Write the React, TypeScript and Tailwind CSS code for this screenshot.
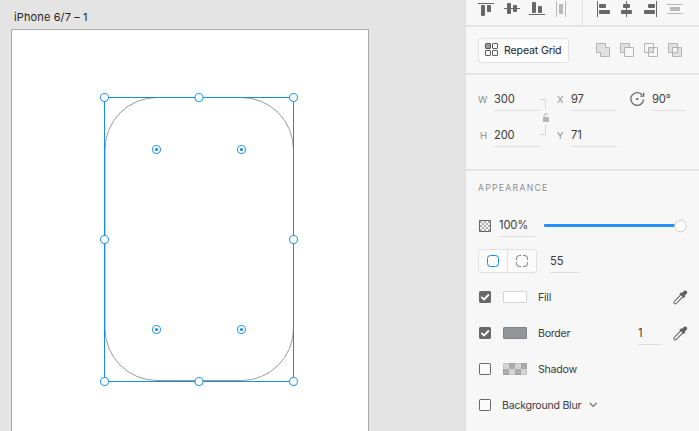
import React from "react";

const INK = "#676767";

function AlignIcons() {
  return (
    <svg width="233" height="25" viewBox="466 0 233 25" className="block shrink-0">
      <g fill={INK}>
        <rect x="478" y="3" width="16" height="1" />
        <rect x="481" y="5" width="4" height="11" rx="1" />
        <rect x="487" y="5" width="4" height="7" rx="1" />
        <rect x="504" y="8" width="16" height="1" />
        <rect x="507" y="3" width="4" height="11" rx="1" />
        <rect x="513" y="5" width="4" height="7" rx="1" />
        <rect x="529" y="14" width="16" height="1" />
        <rect x="532" y="2" width="4" height="11" rx="1" />
        <rect x="538" y="6" width="4" height="7" rx="1" />
        <rect x="597" y="1" width="1" height="16" />
        <rect x="599" y="4" width="7" height="4" rx="1" />
        <rect x="599" y="10" width="11" height="4" rx="1" />
        <rect x="626" y="1" width="1" height="16" />
        <rect x="623" y="4" width="7" height="4" rx="1" />
        <rect x="621" y="10" width="11" height="4" rx="1" />
        <rect x="656" y="1" width="1" height="16" />
        <rect x="648" y="4" width="7" height="4" rx="1" />
        <rect x="644" y="10" width="11" height="4" rx="1" />
      </g>
      <g fill="#b8b8b8">
        <rect x="556" y="1" width="1" height="16" />
        <rect x="559" y="4" width="4" height="10" />
        <rect x="565" y="1" width="1" height="16" />
        <rect x="667" y="4" width="16" height="1" />
        <rect x="670" y="7" width="10" height="4" />
        <rect x="667" y="13" width="16" height="1" />
      </g>
      <rect x="582" y="0" width="1" height="25" fill="#e1e1e1" />
    </svg>
  );
}

function GridIcon() {
  return (
    <svg width="14" height="14" viewBox="0 0 14 14" fill="none" stroke="#5c5c5c" className="shrink-0">
      <rect x="0.5" y="0.5" width="5" height="5" rx="0.5" fill="#999" />
      <rect x="7.5" y="0.5" width="5" height="5" rx="0.5" />
      <rect x="0.5" y="7.5" width="5" height="5" rx="0.5" />
      <rect x="7.5" y="7.5" width="5" height="5" rx="0.5" />
    </svg>
  );
}

function BooleanIcons() {
  return (
    <svg width="87" height="14" viewBox="0 0 87 14" fill="none" stroke="#b3b3b3" className="shrink-0">
      <path d="M.5 .5h9v4h4v9h-9v-4h-4z" fill="#e1e1e1" />
      <path d="M24.500 .5h9v9h-9z" fill="#e1e1e1" />
      <path d="M28.500 4.500h9v9h-9z" fill="#f7f7f7" />
      <path d="M48.500 .5h9v9h-9z" />
      <path d="M52.500 4.500h9v9h-9z" />
      <path d="M52.500 4.500h5v5h-5z" fill="#dedede" />
      <path d="M72.500 .5h9v9h-9z" fill="#e1e1e1" />
      <path d="M76.500 4.500h9v9h-9z" fill="#e1e1e1" />
      <path d="M76.500 4.500h5v5h-5z" fill="#f7f7f7" />
    </svg>
  );
}

function Dropper() {
  return (
    <svg width="15" height="15" viewBox="0 0 15 15" fill="none" className="shrink-0">
      <path d="M8.100 4.500L1.800 10.800Q.6 12.200 1.100 13.300Q2.200 14.400 3.600 13.100L10.200 6.500" stroke="#6e6e6e" strokeWidth="1.100" />
      <path d="M9.200 2.700C10.800 1 11.800 .2 13.200 .7C14.800 1.500 14.300 3.300 13.200 4.300L11.700 5.500L12.200 6.800L10.900 8L6.400 3.700L7.700 2.500Z" fill="#606060" />
    </svg>
  );
}

function Check({ on = false }: { on?: boolean }) {
  return (
    <svg width="12" height="12" viewBox="0 0 12 12" className="shrink-0">
      <rect x="0.500" y="0.500" width="11" height="11" rx="0.700" fill={on ? "#686868" : "#fafafa"} stroke="#686868" />
      {on && <path d="M2.300 5.900L5 8.500L9.900 3.500" fill="none" stroke="white" strokeWidth="1.800" />}
    </svg>
  );
}

function Field({ value, className }: { value: string; className: string }) {
  return (
    <div className={`h-[23px] shrink-0 border-b border-[#dedede] text-[11.2px] leading-[23px] tracking-[-0.15px] text-[#3c3c3c] ${className}`}>
      {value}
    </div>
  );
}

function Label({ children, className = "" }: { children: string; className?: string }) {
  return <span className={`h-[23px] shrink-0 text-[9.5px] leading-[24px] text-[#8e8e8e] ${className}`}>{children}</span>;
}

const handles = [
  [104.5, 97.5], [199, 97.5], [293.5, 97.5],
  [104.5, 239.5], [293.5, 239.5],
  [104.5, 381.5], [199, 381.5], [293.5, 381.5],
];
const corners = [[156.5, 149.5], [241.5, 149.5], [156.5, 329.5], [241.5, 329.5]];

function Artboard() {
  return (
    <div className="h-[402px] w-[358px] border border-b-0 border-[#ababab] bg-white">
      <svg width="356" height="401" viewBox="12 30 356 401" fill="none" className="block">
        <rect x="105" y="97.500" width="188.500" height="283" rx="52" stroke="#999" />
        <rect x="104.500" y="97.500" width="189" height="284" stroke="#168de2" />
        {handles.map(([x, y]) => (
          <circle key={`${x}-${y}`} cx={x} cy={y} r="4" fill="white" stroke="#2e9ae8" strokeWidth="1.100" />
        ))}
        {corners.map(([x, y]) => (
          <g key={`${x}-${y}`}>
            <circle cx={x} cy={y} r="4" fill="white" stroke="#2e9ae8" strokeWidth="1.100" />
            <circle cx={x} cy={y} r="1.600" fill="#168de2" />
          </g>
        ))}
      </svg>
    </div>
  );
}

function TransformSection() {
  return (
    <section className="flex h-[96px] shrink-0 border-b-2 border-[#e4e4e4] pl-[11px] pt-[13px]">
      <div className="flex w-[63px] flex-col gap-[13px]">
        <div className="flex"><Label className="w-[17px] pl-px">W</Label><Field value="300" className="w-[46px]" /></div>
        <div className="flex"><Label className="w-[17px] pl-[3px]">H</Label><Field value="200" className="w-[46px]" /></div>
      </div>
      <svg width="17" height="59" viewBox="540 88 17 59" fill="none" className="shrink-0">
        <path d="M540 99.500h5.500V109M540 134.500h5.500V125" stroke="#d5d5d5" />
        <path d="M544.200 118v-2.200q0-2.100 1.800-2.100q1.600 0 1.800 1.500" stroke="#b5b5b5" />
        <rect x="543" y="117" width="6" height="5" rx=".5" fill="#b5b5b5" />
      </svg>
      <div className="flex w-[73px] flex-col gap-[13px]">
        <div className="flex"><Label className="w-[14px]">X</Label><Field value="97" className="w-[46px]" /></div>
        <div className="flex"><Label className="w-[14px]">Y</Label><Field value="71" className="w-[46px]" /></div>
      </div>
      <svg width="15" height="16" viewBox="0 0 15 16" fill="none" className="mr-[7px] mt-[3px] shrink-0">
        <path d="M12.400 4.200A6.400 6.400 0 1 0 13.600 8.500" stroke="#666" strokeWidth="1.250" />
        <path d="M13.700 1.600V5.200H10.300" stroke="#666" strokeWidth="1.200" />
        <rect x="6.200" y="7" width="2" height="2" fill="#666" />
      </svg>
      <Field value="90°" className="w-[34px]" />
    </section>
  );
}

function PaintRow({ on = false, swatch, name, children }: { on?: boolean; swatch: React.ReactNode; name: string; children?: React.ReactNode }) {
  return (
    <div className="flex h-9 shrink-0 items-center pl-[13px] pr-[11px]">
      <Check on={on} />
      <div className="ml-3 mr-[11px] h-3 w-6 shrink-0">{swatch}</div>
      <span className="flex-1 pt-[2px] text-[10.6px] tracking-[-0.25px] text-[#3c3c3c]">{name}</span>
      {children}
    </div>
  );
}

export default function App() {
  return (
    <main className="flex h-[431px] w-[699px] overflow-hidden bg-[#e4e4e4] font-['Inter','Liberation_Sans',sans-serif]">
      <section className="w-[465px] shrink-0 pl-[11px]">
        <h1 className="h-[29px] pl-[3px] pt-[8px] text-[11px] leading-[18px] tracking-[0.12px] text-[#242424]">iPhone 6/7 – 1</h1>
        <Artboard />
      </section>
      <aside className="flex w-[234px] shrink-0 flex-col border-l border-[#dfdfdf] bg-[#f7f7f7]">
        <header className="h-[27px] shrink-0 border-b-2 border-[#e4e4e4]"><AlignIcons /></header>
        <section className="flex h-12 shrink-0 items-center border-b-2 border-[#e4e4e4] pl-3">
          <button className="mr-[27px] flex h-[25px] w-[91px] shrink-0 items-center gap-[5px] rounded-[3px] border border-[#e1e1e1] bg-[#fdfdfd] pl-[6px] text-[10.6px] tracking-[-0.15px] text-[#242424]">
            <GridIcon /><span className="whitespace-nowrap pt-[2px]">Repeat Grid</span>
          </button>
          <BooleanIcons />
        </section>
        <TransformSection />
        <section className="flex flex-1 flex-col">
          <h2 className="h-[43px] shrink-0 pl-3 pt-[9px] text-[8.7px] leading-[16px] tracking-[1.25px] text-[#8e8e8e]">APPEARANCE</h2>
          <div className="flex h-[23px] shrink-0 items-center pl-[13px]">
            <svg width="12" height="12" viewBox="0 0 12 12" className="mr-2 shrink-0">
              <rect width="12" height="12" rx="1" fill="#666" />
              <rect x="1" y="1" width="10" height="10" fill="#f4f4f4" />
              {Array.from({ length: 25 }, (_, i) => i).filter(i => i % 2 === 0).map(i => (
                <rect key={i} x={1 + (i % 5) * 2} y={1 + Math.floor(i / 5) * 2} width="2" height="2" fill="#b0b0b0" />
              ))}
            </svg>
            <Field value="100%" className="w-9" />
            <svg width="146" height="16" viewBox="0 0 146 16" className="ml-[9px] shrink-0">
              <rect y="6" width="133" height="3" rx="1" fill="#2590fb" />
              <circle cx="136.500" cy="8" r="5.800" fill="white" stroke="#cecece" />
            </svg>
          </div>
          <div className="mt-3 flex h-6 shrink-0 pl-3">
            <div className="mr-[13px] flex w-[59px] shrink-0 rounded-[3px] border border-[#e1e1e1] bg-[#fbfbfb]">
              <div className="flex w-[29px] items-center justify-center border-r border-[#e1e1e1]">
                <svg width="12" height="12" viewBox="0 0 12 12" fill="none"><rect x=".5" y=".5" width="11" height="11" rx="3" stroke="#168de2" /></svg>
              </div>
              <div className="flex flex-1 items-center justify-center">
                <svg width="12" height="12" viewBox="0 0 12 12" fill="none" stroke="#777"><path d="M5 .5H3.500Q.5 .5 .5 3.500V5M7 .5H8.500Q11.500 .5 11.500 3.500V5M11.500 7V8.500Q11.500 11.500 8.500 11.500H7M5 11.500H3.500Q.5 11.500 .5 8.500V7" /></svg>
              </div>
            </div>
            <Field value="55" className="mt-px w-[30px]" />
          </div>
          <div className="mt-[6px] flex flex-col">
            <PaintRow on name="Fill" swatch={<div className="h-3 w-6 rounded-[1px] border border-[#d5d5d5] bg-white" />}><Dropper /></PaintRow>
            <PaintRow on name="Border" swatch={<div className="h-3 w-6 rounded-[1px] border border-[#808486] bg-[#929699]" />}>
              <Field value="1" className="mr-[11px] w-6" /><Dropper />
            </PaintRow>
            <PaintRow name="Shadow" swatch={
              <svg width="24" height="12" viewBox="0 0 24 12">
                <rect width="24" height="12" rx="1" fill="#d5d5d5" />
                <path d="M6 0h6v6H6zM18 0h5q1 0 1 1v5h-6zM0 6h6v6H1q-1 0-1-1zM12 6h6v6h-6z" fill="#aaa" />
                <rect x=".5" y=".5" width="23" height="11" rx=".5" fill="none" stroke="#777" strokeOpacity=".2" />
              </svg>
            } />
            <div className="flex h-9 items-center pl-[13px]">
              <Check />
              <span className="ml-[11px] w-[87px] whitespace-nowrap pt-[2px] text-[10.6px] tracking-[-0.25px] text-[#3c3c3c]">Background Blur</span>
              <svg width="9" height="6" viewBox="0 0 9 6" fill="none" stroke="#777" strokeWidth="1.300"><path d="M.8 1L4.200 4.400L7.600 1" /></svg>
            </div>
          </div>
        </section>
      </aside>
    </main>
  );
}
